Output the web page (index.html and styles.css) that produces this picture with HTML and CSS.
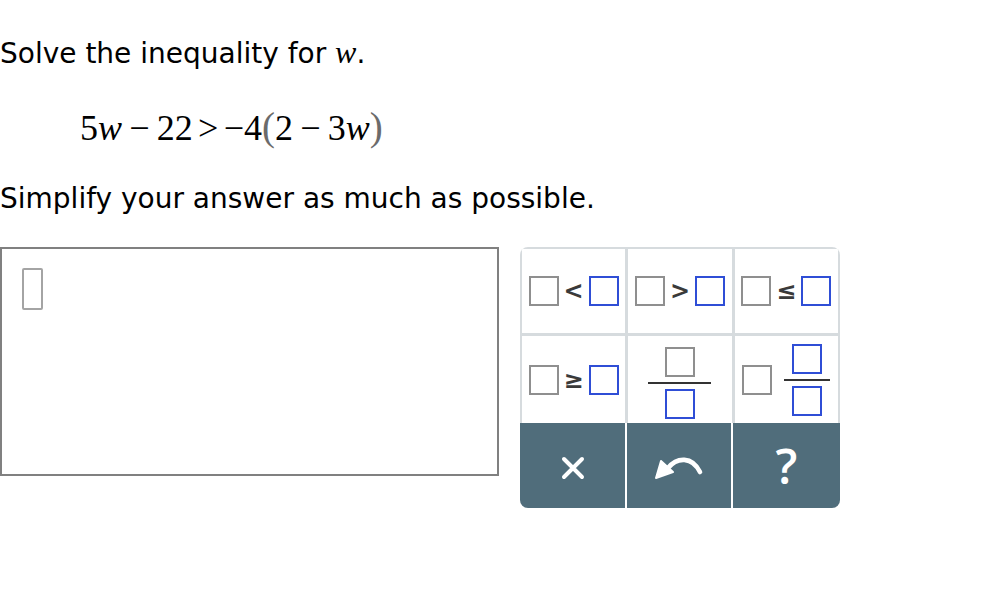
FILE: index.html
```html
<!DOCTYPE html>
<html lang="en">
<head>
<meta charset="utf-8">
<title>Solve the inequality</title>
<link rel="stylesheet" href="styles.css">
</head>
<body>
<main class="page">
  <p class="prompt first">Solve the inequality for <i class="var">w</i>.</p>
  <div class="equation"><span>5</span><i class="mvar">w</i><span class="bin">−</span><span>22</span><span class="rel">&gt;</span><span>−4</span><span class="paren">(</span><span>2</span><span class="bin">−</span><span>3</span><i class="mvar">w</i><span class="paren">)</span></div>
  <p class="prompt second">Simplify your answer as much as possible.</p>
  <div class="work">
    <div class="answer"><span class="caret"></span></div>
    <div class="keypad">
      <div class="keys">
        <div class="key"><div class="expr"><span class="box"></span><span class="op">&lt;</span><span class="box blue"></span></div></div>
        <div class="key"><div class="expr"><span class="box"></span><span class="op">&gt;</span><span class="box blue"></span></div></div>
        <div class="key"><div class="expr"><span class="box"></span><span class="op">≤</span><span class="box blue"></span></div></div>
        <div class="key"><div class="expr"><span class="box"></span><span class="op">≥</span><span class="box blue"></span></div></div>
        <div class="key"><div class="frac wide low"><span class="box"></span><span class="bar"></span><span class="box blue"></span></div></div>
        <div class="key"><div class="expr mixed"><span class="box"></span><div class="frac"><span class="box blue"></span><span class="bar"></span><span class="box blue"></span></div></div></div>
      </div>
      <div class="actions">
        <div class="action">
          <svg class="icon-x" width="24" height="24" viewBox="0 0 24 24"><path d="M3 3 L21 21 M21 3 L3 21" stroke="#fff" stroke-width="4" stroke-linecap="round" fill="none"/></svg>
        </div>
        <div class="action">
          <svg class="icon-undo" width="50" height="26" viewBox="0 0 50 26"><path d="M14 13 C23 2 38 1 46 17" stroke="#fff" stroke-width="4.6" stroke-linecap="round" fill="none"/><polygon points="2,23 7,6 19,17" fill="#fff" stroke="#fff" stroke-width="2" stroke-linejoin="round"/></svg>
        </div>
        <div class="action"><span class="help">?</span></div>
      </div>
    </div>
  </div>
</main>
</body>
</html>
```

FILE: styles.css
```css
html, body {
  margin: 0;
  padding: 0;
  background: #ffffff;
}

body {
  font-family: "DejaVu Sans", Verdana, sans-serif;
  color: #000000;
}

.page {
  display: flex;
  flex-direction: column;
  align-items: flex-start;
}

.prompt {
  margin: 0;
  font-size: 28px;
  line-height: 32px;
  white-space: nowrap;
}

.prompt.first {
  margin-top: 36px;
}

.prompt.second {
  margin-top: 35px;
}

.var {
  font-family: "Liberation Serif", "Times New Roman", serif;
  font-style: italic;
  font-size: 32px;
}

.equation {
  margin: 37px 0 0 80px;
  font-family: "Liberation Serif", "Times New Roman", serif;
  font-size: 36px;
  line-height: 40px;
  white-space: nowrap;
  color: #000;
}

.mvar {
  font-style: italic;
}

.bin {
  margin: 0 0.2em;
}

.rel {
  margin: 0 0.15em;
}

.paren {
  color: #6b6b6b;
  font-size: 39px;
}

.work {
  display: flex;
  align-items: flex-start;
  gap: 21px;
  margin-top: 32px;
}

.answer {
  width: 455px;
  height: 187px;
  padding: 19px 20px;
  border: 2px solid #808080;
}

.caret {
  display: block;
  width: 17px;
  height: 38px;
  border: 2px solid #a4a4a4;
  border-radius: 2px;
}

.keypad {
  width: 320px;
  border-radius: 8px;
  overflow: hidden;
  background: #d6dbde;
}

.keys {
  display: grid;
  grid-template-columns: repeat(3, 1fr);
  grid-template-rows: 84px 87px;
  gap: 3px;
  padding: 2px 2px 0;
}

.key {
  background: #ffffff;
  display: flex;
  align-items: center;
  justify-content: center;
}

.expr {
  display: flex;
  align-items: center;
}

.box {
  display: block;
  width: 26px;
  height: 26px;
  border: 2px solid #8f8f8f;
}

.box.blue {
  border-color: #2f4ed6;
}

.op {
  width: 30px;
  text-align: center;
  font-family: "DejaVu Sans", sans-serif;
  font-weight: bold;
  font-size: 24px;
  color: #3a3a3a;
  line-height: 30px;
}

.frac {
  display: flex;
  flex-direction: column;
  align-items: center;
  gap: 5px;
}

.frac .bar {
  display: block;
  width: 46px;
  height: 2px;
  background: #333333;
}

.frac.wide .bar {
  width: 63px;
}

.frac.low {
  margin-top: 7px;
}

.mixed {
  gap: 12px;
}

.actions {
  display: grid;
  grid-template-columns: 105px 104px 107px;
  gap: 2px;
  height: 85px;
  background: #ffffff;
}

.action {
  background: #506d7b;
  display: flex;
  align-items: center;
  justify-content: center;
}

.icon-x {
  margin-top: 4px;
}

.icon-undo {
  margin-top: 4px;
}

.help {
  font-family: "Open Sans", sans-serif;
  font-weight: 600;
  font-size: 48px;
  line-height: 48px;
  color: #ffffff;
  margin-top: 0;
}
```
